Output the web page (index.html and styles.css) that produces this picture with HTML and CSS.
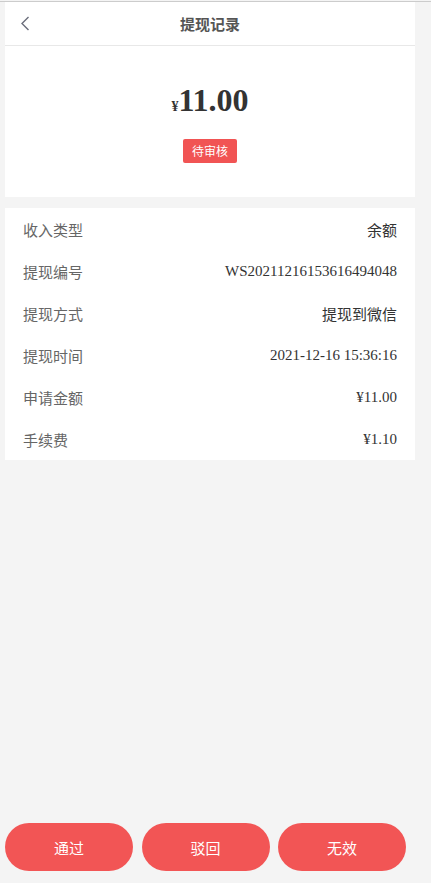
FILE: index.html
```html
<!DOCTYPE html>
<html lang="zh-CN">
<head>
  <meta charset="UTF-8">
  <title>提现记录</title>
  <link rel="stylesheet" href="styles.css">
</head>
<body>

<div id="page">
  <div class="card summary">
    <div class="header">
      <span class="back">
        <svg width="10" height="15" viewBox="0 0 10 15"><path d="M8.5 1 L2 7.5 L8.5 14" fill="none" stroke="#6b6e7c" stroke-width="1.4"/></svg>
      </span>
      <span class="title">提现记录</span>
    </div>
    <div class="amount"><span class="yen">¥</span>11.00</div>
    <div class="status"><span class="badge">待审核</span></div>
  </div>

  <div class="card detail">
    <div class="row"><span class="label">收入类型</span><span class="value">余额</span></div>
    <div class="row"><span class="label">提现编号</span><span class="value">WS20211216153616494048</span></div>
    <div class="row"><span class="label">提现方式</span><span class="value">提现到微信</span></div>
    <div class="row"><span class="label">提现时间</span><span class="value">2021-12-16 15:36:16</span></div>
    <div class="row"><span class="label">申请金额</span><span class="value">¥11.00</span></div>
    <div class="row"><span class="label">手续费</span><span class="value">¥1.10</span></div>
  </div>

  <div class="actions">
    <button>通过</button>
    <button>驳回</button>
    <button>无效</button>
  </div>
</div>

</body>
</html>
```

FILE: styles.css
```css
html, body {
  padding: 0;
  margin: 0;
  background-color: #f4f4f4;
}

body {
  font-family: "Noto Sans CJK SC", "Noto Sans", sans-serif;
}

#page {
  display: flex;
  flex-direction: column;
  min-height: 881px;
  margin-top: 1px;
  border-top: 1px solid #cccccc;
}

.card {
  width: 410px;
  margin-left: 5px;
  background-color: #fff;
}

.header {
  position: relative;
  height: 43px;
  display: flex;
  align-items: center;
  justify-content: center;
  border-bottom: 1px solid #e8e8e8;
}

.header .back {
  position: absolute;
  left: 15px;
  top: 14px;
  display: flex;
}

.header .title {
  font-size: 15px;
  font-weight: bold;
  color: #555;
}

.amount {
  padding-top: 39px;
  height: 31px;
  text-align: center;
  font-family: "Liberation Serif", serif;
  font-weight: bold;
  font-size: 32px;
  line-height: 31px;
  color: #333;
}

.amount .yen {
  font-size: 14px;
  line-height: 0;
}

.status {
  display: flex;
  justify-content: center;
  padding: 23px 0 34px;
}

.badge {
  background-color: #f15454;
  color: #fff;
  font-size: 12px;
  line-height: 24px;
  height: 24px;
  padding: 0 9px;
  border-radius: 2px;
}

.detail {
  margin-top: 11px;
}

.row {
  display: flex;
  align-items: center;
  justify-content: space-between;
  height: 42px;
  padding: 0 18px;
  font-size: 15px;
}

.row .label {
  color: #666;
}

.row .value {
  font-family: "Liberation Serif", "Noto Sans CJK SC", serif;
  color: #333;
}

.actions {
  margin-top: auto;
  margin-bottom: 12px;
  padding-left: 5px;
  display: flex;
  gap: 8.5px;
}

.actions button {
  width: 128px;
  height: 48px;
  border: none;
  border-radius: 24px;
  background-color: #f25555;
  color: #fff;
  font-family: "Noto Sans CJK SC", sans-serif;
  font-size: 15px;
}
```
